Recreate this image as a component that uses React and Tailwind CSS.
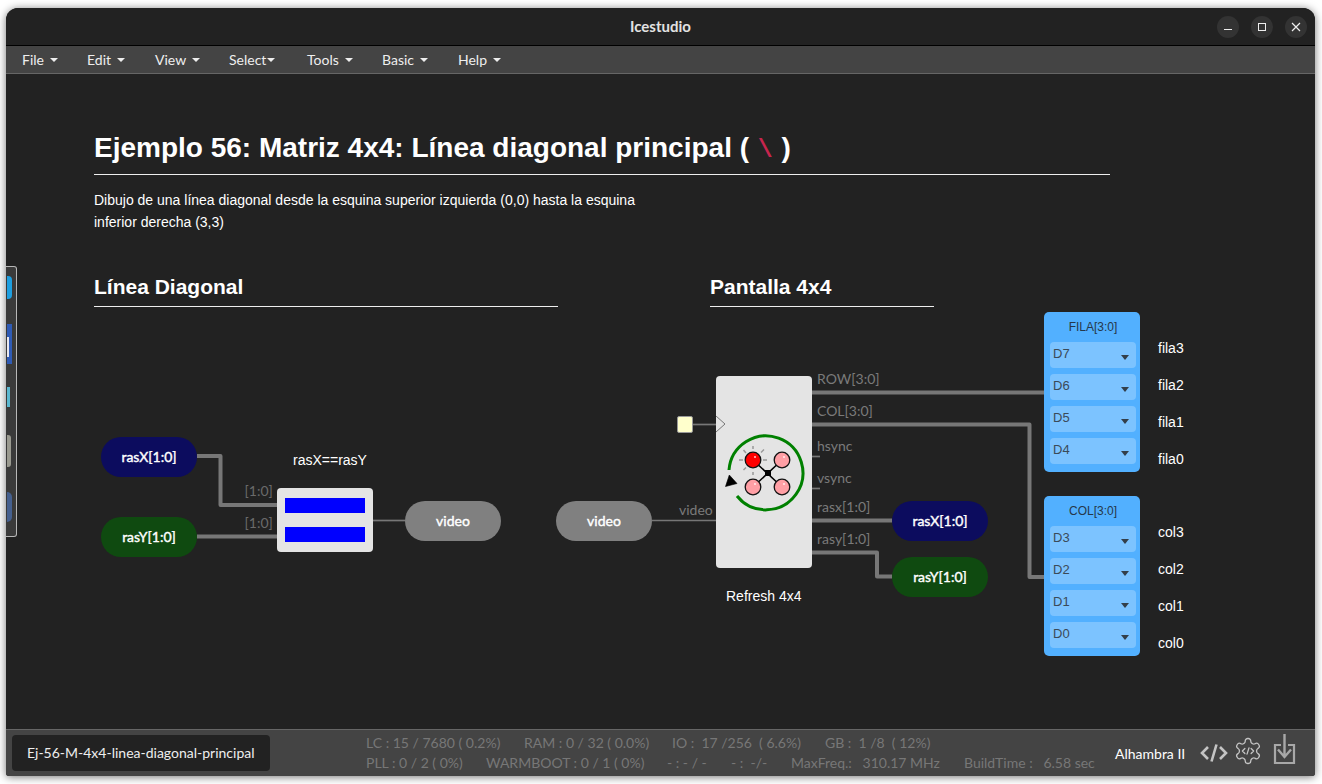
import React from 'react';

const lato = "font-['Lato',sans-serif]";
const arial = "font-['Liberation_Sans',Arial,sans-serif]";

const menus = [
  ['File', 'w-[65px]'],
  ['Edit', 'w-[68px]'],
  ['View', 'w-[74px]'],
  ['Select', 'w-[78px]'],
  ['Tools', 'w-[75px]'],
  ['Basic', 'w-[76px]'],
  ['Help', 'w-[70px]'],
];

const filaRows = ['D7', 'D6', 'D5', 'D4'];
const colRows = ['D3', 'D2', 'D1', 'D0'];

const Caret = ({ className = '' }) => (
  <span className={`inline-block w-0 h-0 border-x-[4px] border-x-transparent border-t-[4px] border-t-[#eeeeee] ${className}`} />
);

const Pill = ({ children, className }) => (
  <div className={`absolute w-[96px] h-[40px] rounded-[20px] flex items-center justify-center pb-[2px] text-[14px] text-white [-webkit-text-stroke:0.4px_white] ${className}`}>
    {children}
  </div>
);

const PinBlock = ({ title, rows, className }) => (
  <div className={`absolute w-[96px] h-[160px] rounded-[5px] bg-[#52b0ff] pl-[6px] pr-[4px] ${className}`}>
    <div className={`${arial} h-[30px] leading-[30px] text-center text-[12px] text-[#26384a]`}>{title}</div>
    <div className="flex flex-col gap-[6px]">
      {rows.map((r) => (
        <div key={r} className="relative h-[26px] rounded-[4px] bg-[#7cc3ff] pl-[3px] leading-[22px] text-[13px] text-[#3b4a58]">
          <span className={arial}>{r}</span>
          <span className="absolute right-[7px] top-[13px] w-0 h-0 border-x-[4px] border-x-transparent border-t-[5px] border-t-[#333f4a]" />
        </div>
      ))}
    </div>
  </div>
);

const RefreshIcon = () => (
  <svg className="absolute left-0 top-0" width="96" height="192" viewBox="0 0 96 192">
    <path d="M13 94 A37 37 0 1 1 21 120" fill="none" stroke="#008000" strokeWidth="3" />
    <path d="M13.3 99 L9.5 110.5 L21 107.5 Z" fill="#000" stroke="#000" strokeWidth="0.6" />
    <g stroke="#000" strokeWidth="1.5">
      <line x1="37" y1="84" x2="66" y2="111" />
      <line x1="66" y1="84" x2="37" y2="111" />
    </g>
    <rect x="49" y="94" width="6" height="6" fill="#000" />
    <g stroke="#999" strokeWidth="1.5">
      <line x1="37" y1="70" x2="37" y2="73" />
      <line x1="37" y1="96" x2="37" y2="99" />
      <line x1="23" y1="84" x2="27" y2="84" />
      <line x1="47" y1="84" x2="51" y2="84" />
      <line x1="27.5" y1="74" x2="30" y2="77" />
      <line x1="48" y1="73.5" x2="45" y2="76.5" />
      <line x1="27.5" y1="94" x2="30" y2="91.5" />
    </g>
    <g stroke="#111" strokeWidth="1.3">
      <circle cx="37" cy="84" r="7.8" fill="#ff0000" />
      <circle cx="66" cy="84" r="7.8" fill="#ff9fa5" />
      <circle cx="37" cy="111" r="7.8" fill="#ff9fa5" />
      <circle cx="66" cy="111" r="7.8" fill="#ff9fa5" />
    </g>
    <g fill="#fff" opacity="0.8">
      <circle cx="39" cy="81" r="1" />
      <circle cx="68" cy="81" r="1" />
      <circle cx="39" cy="108" r="1" />
      <circle cx="68" cy="108" r="1" />
    </g>
  </svg>
);

const Wires = () => (
  <svg className="absolute left-0 top-0" width="1309" height="655" viewBox="6 74 1309 655">
    <g fill="none" stroke="#777777" strokeWidth="4" strokeLinejoin="round">
      <path d="M197 456 H220.5 V505 H277" />
      <path d="M197 536.5 H277" />
      <path d="M812 392.5 H1044" />
      <path d="M812 424.5 H1029.5 V577 H1044" />
      <path d="M812 520.5 H892" />
      <path d="M812 552.5 H877 V576.5 H892" />
    </g>
    <g fill="none" stroke="#777777" strokeWidth="1.7">
      <path d="M373 520.5 H405" />
      <path d="M652 520.5 H716" />
      <path d="M692 424.5 H716" />
      <path d="M812 456.5 H820" />
      <path d="M812 488.5 H820" />
    </g>
  </svg>
);

const GearCode = () => (
  <svg width="30" height="30" viewBox="0 0 24 24" fill="none" stroke="#c4c4c4" strokeWidth="1.05" strokeLinecap="round" strokeLinejoin="round">
    <path d="M12.22 2h-.44a2 2 0 0 0-2 2v.18a2 2 0 0 1-1 1.73l-.43.25a2 2 0 0 1-2 0l-.15-.08a2 2 0 0 0-2.73.73l-.22.38a2 2 0 0 0 .73 2.73l.15.1a2 2 0 0 1 1 1.72v.51a2 2 0 0 1-1 1.74l-.15.09a2 2 0 0 0-.73 2.73l.22.38a2 2 0 0 0 2.73.73l.15-.08a2 2 0 0 1 2 0l.43.25a2 2 0 0 1 1 1.73V20a2 2 0 0 0 2 2h.44a2 2 0 0 0 2-2v-.18a2 2 0 0 1 1-1.73l.43-.25a2 2 0 0 1 2 0l.15.08a2 2 0 0 0 2.73-.73l.22-.39a2 2 0 0 0-.73-2.73l-.15-.08a2 2 0 0 1-1-1.74v-.5a2 2 0 0 1 1-1.74l.15-.09a2 2 0 0 0 .73-2.73l-.22-.38a2 2 0 0 0-2.73-.73l-.15.08a2 2 0 0 1-2 0l-.43-.25a2 2 0 0 1-1-1.73V4a2 2 0 0 0-2-2z" />
    <path d="M9.5 10 L7.5 12 L9.5 14 M14.5 10 L16.5 12 L14.5 14 M12.8 9.5 L11.2 14.5" />
  </svg>
);

export default function App() {
  return (
    <div className="w-[1322px] h-[784px] bg-white pt-[8px] pl-[6px] overflow-hidden">
      <div className={`relative w-[1309px] h-[768px] flex flex-col rounded-t-[12px] rounded-b-[3px] bg-[#222222] shadow-[0_1px_8px_rgba(0,0,0,0.55)] overflow-hidden ${lato}`}>
        {/* title bar */}
        <div className="relative h-[38px] shrink-0 flex items-center justify-center border-b border-black bg-[#222222]">
          <span className="text-[15px] font-bold text-[#e2e2e2]">Icestudio</span>
          <div className="absolute right-[8px] top-[8px] flex gap-[12px]">
            <div className="w-[22px] h-[22px] rounded-full bg-[#333333] flex items-center justify-center">
              <span className="block w-[8px] h-[1px] mt-[4px] bg-[#eeeeee]" />
            </div>
            <div className="w-[22px] h-[22px] rounded-full bg-[#333333] flex items-center justify-center">
              <span className="block w-[8px] h-[8px] border border-[#eeeeee]" />
            </div>
            <div className="w-[22px] h-[22px] rounded-full bg-[#333333] flex items-center justify-center">
              <svg width="10" height="10" viewBox="0 0 10 10" stroke="#eeeeee" strokeWidth="1.2"><path d="M1 1 L9 9 M9 1 L1 9" /></svg>
            </div>
          </div>
        </div>

        {/* menu */}
        <div className="h-[28px] shrink-0 flex items-center pl-[16px] bg-[#444444] border-b border-[#666666] text-[14px] text-[#eeeeee]">
          {menus.map(([name, w]) => (
            <div key={name} className={`${w} flex items-center`}>
              <span>{name}</span>
              <Caret className={name === 'Select' ? 'ml-[1px]' : 'ml-[6px]'} />
            </div>
          ))}
        </div>

        {/* canvas */}
        <div className="relative h-[655px] shrink-0 bg-[#222222] overflow-hidden">
          <Wires />

          <div className={`${arial} absolute left-[88px] top-[56px] w-[1016px] text-white`}>
            <h1 className="h-[45px] border-b border-[#eeeeee] text-[28px] leading-[36px] font-bold whitespace-nowrap">
              Ejemplo 56: Matriz 4x4: Línea diagonal principal ( <code className="px-[1px] leading-none font-['Liberation_Mono',monospace] text-[25px] text-[#c7254e]">\</code> )
            </h1>
            <p className="mt-[15px] w-[560px] text-[14px] leading-[21.5px]">
              Dibujo de una línea diagonal desde la esquina superior izquierda (0,0) hasta la esquina inferior derecha (3,3)
            </p>
          </div>

          <h2 className={`${arial} absolute left-[88px] top-[199px] w-[464px] pb-[5px] border-b border-[#eeeeee] text-[21px] leading-[28px] font-bold text-white`}>Línea Diagonal</h2>
          <h2 className={`${arial} absolute left-[704px] top-[199px] w-[224px] pb-[5px] border-b border-[#eeeeee] text-[21px] leading-[28px] font-bold text-white`}>Pantalla 4x4</h2>

          {/* left diagram */}
          <Pill className="left-[95px] top-[363px] bg-[#0c0c5e]">rasX[1:0]</Pill>
          <Pill className="left-[95px] top-[443px] bg-[#0f4a10]">rasY[1:0]</Pill>
          <div className="absolute left-[238.5px] top-[408px] flex flex-col gap-[14px] text-[14px] leading-[18px] text-[#6a6a6a]">
            <span>[1:0]</span>
            <span>[1:0]</span>
          </div>
          <span className={`${arial} absolute left-[287px] top-[377px] text-[14px] leading-[18px] text-white`}>rasX==rasY</span>
          <div className="absolute left-[271px] top-[414px] w-[96px] h-[64px] rounded-[4px] bg-[#e4e4e4] px-[8px] pt-[10px] flex flex-col gap-[14px]">
            <div className="h-[15px] bg-[#0000ff]" />
            <div className="h-[15px] bg-[#0000ff]" />
          </div>
          <Pill className="left-[399px] top-[427px] bg-[#808080]">video</Pill>

          {/* right diagram */}
          <Pill className="left-[550px] top-[427px] bg-[#808080]">video</Pill>
          <span className="absolute left-[673px] top-[427px] text-[14px] leading-[18px] text-[#7a7a7a]">video</span>
          <div className="absolute left-[671px] top-[342px] w-[16px] h-[17px] rounded-[2px] bg-[#ffffcc] border border-[#999999]" />
          <div className="absolute left-[710px] top-[302px] w-[96px] h-[192px] rounded-[4px] bg-[#e4e4e4]">
            <RefreshIcon />
          </div>
          <svg className="absolute left-[710px] top-[342px]" width="10" height="17" viewBox="0 0 10 17">
            <path d="M0 0 L9 8 L0 16" fill="#e4e4e4" stroke="#777777" strokeWidth="1" />
          </svg>
          <span className={`${arial} absolute left-[720px] top-[513px] text-[14px] leading-[18px] text-white`}>Refresh 4x4</span>

          <div className="absolute left-[811px] top-[296px] flex flex-col text-[14px] leading-[18px] text-[#7a7a7a]">
            <span className="h-[32px]">ROW[3:0]</span>
            <span className="h-[32px]">COL[3:0]</span>
            <span className="h-[32px] pt-[3px]">hsync</span>
            <span className="h-[32px] pt-[3px]">vsync</span>
            <span className="h-[32px]">rasx[1:0]</span>
            <span className="h-[32px]">rasy[1:0]</span>
          </div>

          <Pill className="left-[886px] top-[427px] bg-[#0c0c5e]">rasX[1:0]</Pill>
          <Pill className="left-[886px] top-[483px] bg-[#0f4a10]">rasY[1:0]</Pill>

          <PinBlock title="FILA[3:0]" rows={filaRows} className="left-[1038px] top-[238px]" />
          <PinBlock title="COL[3:0]" rows={colRows} className="left-[1038px] top-[422px]" />

          <div className={`${arial} absolute left-[1152px] top-[265px] flex flex-col gap-[19px] text-[14px] leading-[18px] text-white`}>
            <span>fila3</span>
            <span>fila2</span>
            <span>fila1</span>
            <span>fila0</span>
          </div>
          <div className={`${arial} absolute left-[1152px] top-[449px] flex flex-col gap-[19px] text-[14px] leading-[18px] text-white`}>
            <span>col3</span>
            <span>col2</span>
            <span>col1</span>
            <span>col0</span>
          </div>
        </div>

        {/* footer */}
        <div className="h-[47px] shrink-0 flex items-center bg-[#444444] border-t border-[#666666] pl-[6px]">
          <div className="w-[258px] h-[36px] rounded-[4px] bg-[#222222] flex items-center pl-[15px] pb-[2px] text-[14px] text-[#eeeeee] whitespace-nowrap">
            Ej-56-M-4x4-linea-diagonal-principal
          </div>
          <div className="ml-[96px] w-[749px] flex flex-col text-[14px] leading-[20px] text-[#777777] whitespace-pre">
            <div className="flex">
              <span className="w-[158px]">LC : 15 / 7680 ( 0.2%)</span>
              <span className="w-[148px]">RAM : 0 / 32 ( 0.0%)</span>
              <span className="w-[153px]">IO :  17 /256  ( 6.6%)</span>
              <span>GB :  1 /8  ( 12%)</span>
            </div>
            <div className="flex">
              <span className="w-[120px]">PLL : 0 / 2 ( 0%)</span>
              <span className="w-[181px]">WARMBOOT : 0 / 1 ( 0%)</span>
              <span className="w-[64px]">- : - / -</span>
              <span className="w-[60px]">- :  -/-</span>
              <span className="w-[173px]">MaxFreq.:   310.17 MHz</span>
              <span>BuildTime :   6.58 sec</span>
            </div>
          </div>
          <span className="text-[14px] text-white">Alhambra II</span>
          <div className="ml-[15px] flex items-center">
            <svg width="28" height="20" viewBox="0 0 28 20" fill="none" stroke="#c4c4c4" strokeWidth="2.6">
              <path d="M8 4 L2 10 L8 16 M20 4 L26 10 L20 16 M16.5 1.5 L11.5 18.5" />
            </svg>
            <div className="ml-[5px] mb-[4px]"><GearCode /></div>
            <svg className="ml-[10px] mb-[8px]" width="23" height="32" viewBox="0 0 23 32" fill="none" stroke="#a8a8a8" strokeWidth="2.2">
              <path d="M8 12 H2 V30 H21 V12 H15" />
              <path d="M11.5 1 V23 M5 16.5 L11.5 24 L18 16.5" strokeWidth="2.4" />
            </svg>
          </div>
        </div>

        {/* dock peeking in from the left */}
        <div className="absolute left-0 top-[258px] w-[11px] h-[271px] bg-[#3a3a3a] border border-l-0 border-[#b8b8b8] rounded-r-[3px] flex flex-col">
          <div className="ml-px mt-[9px] w-[5px] h-[23px] rounded-r-[4px] bg-[#1e9fe0]" />
          <div className="ml-px mt-[25px] w-[5px] h-[40px] bg-[#2f5bb5] pt-[13px]">
            <div className="w-[2px] h-[20px] bg-[#e8e8f0]" />
          </div>
          <div className="ml-px mt-[23px] w-[3px] h-[20px] bg-[#5bb8d0]" />
          <div className="ml-px mt-[28px] w-[4px] h-[32px] rounded-r-[3px] bg-[#9a9a90]" />
          <div className="ml-px mt-[25px] w-[5px] h-[30px] rounded-r-full bg-[#45608f]" />
        </div>
      </div>
    </div>
  );
}
